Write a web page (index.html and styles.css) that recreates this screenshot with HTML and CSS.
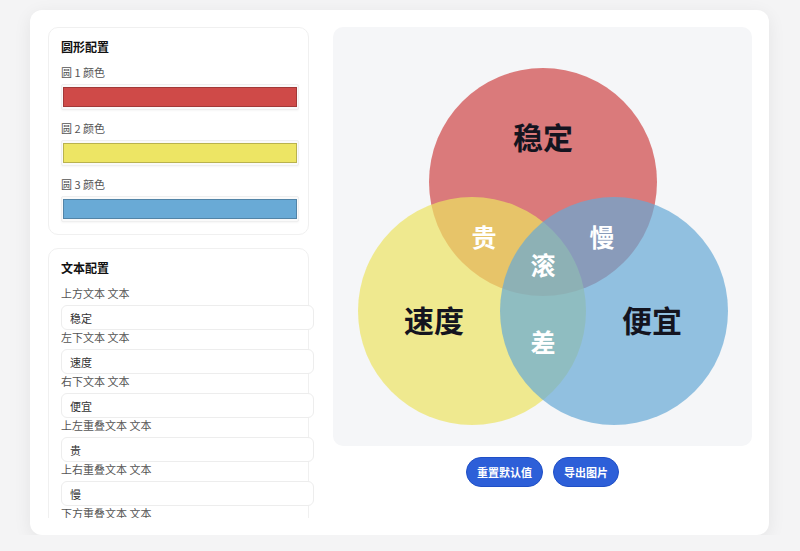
FILE: index.html
```html
<!DOCTYPE html>
<html lang="zh-CN">
<head>
<meta charset="utf-8">
<title>韦恩图</title>
<link rel="stylesheet" href="styles.css">
</head>
<body>
<div class="app">
  <aside class="sidebar">
    <section class="panel">
      <h3 class="panel-title">圆形配置</h3>
      <div class="field">
        <label class="label">圆 1 颜色</label>
        <div class="swatch-frame"><div class="swatch swatch-red"></div></div>
      </div>
      <div class="field">
        <label class="label">圆 2 颜色</label>
        <div class="swatch-frame"><div class="swatch swatch-yellow"></div></div>
      </div>
      <div class="field">
        <label class="label">圆 3 颜色</label>
        <div class="swatch-frame"><div class="swatch swatch-blue"></div></div>
      </div>
    </section>
    <section class="panel panel-text">
      <h3 class="panel-title">文本配置</h3>
      <label class="tlabel">上方文本 文本</label>
      <input class="tinput" type="text" value="稳定">
      <label class="tlabel">左下文本 文本</label>
      <input class="tinput" type="text" value="速度">
      <label class="tlabel">右下文本 文本</label>
      <input class="tinput" type="text" value="便宜">
      <label class="tlabel">上左重叠文本 文本</label>
      <input class="tinput" type="text" value="贵">
      <label class="tlabel">上右重叠文本 文本</label>
      <input class="tinput" type="text" value="慢">
      <label class="tlabel">下方重叠文本 文本</label>
    </section>
  </aside>
  <main class="stage">
    <div class="canvas">
      <svg class="venn" width="419" height="419" viewBox="0 0 419 419">
        <circle cx="210" cy="155" r="114" fill="#cf4646" fill-opacity="0.7"/>
        <circle cx="139" cy="284" r="114" fill="#ede462" fill-opacity="0.7"/>
        <circle cx="281" cy="284" r="114" fill="#67a9d6" fill-opacity="0.7"/>
        <g class="main-text">
          <text x="210" y="109">稳定</text>
          <text x="101" y="292">速度</text>
          <text x="319" y="292">便宜</text>
        </g>
        <g class="overlap-text">
          <text x="151" y="209">贵</text>
          <text x="269" y="209">慢</text>
          <text x="210" y="237">滚</text>
          <text x="210" y="314">差</text>
        </g>
      </svg>
    </div>
    <div class="actions">
      <button class="btn" type="button">重置默认值</button>
      <button class="btn" type="button">导出图片</button>
    </div>
  </main>
</div>
</body>
</html>
```
FILE: styles.css
```css
* { box-sizing: border-box; }

html, body {
  margin: 0;
  padding: 0;
}

body {
  background: #f4f4f5;
  font-family: "PingFang SC", "Noto Sans CJK SC", "Noto Sans", sans-serif;
  color: #222;
  padding-top: 10px;
}

.app {
  width: 739px;
  height: 525px;
  margin: 0 0 0 30px;
  background: #ffffff;
  border-radius: 12px;
  box-shadow: 0 4px 18px rgba(0, 0, 0, 0.07);
  padding: 17px 17px 17px 18px;
  display: flex;
  gap: 24px;
}

.sidebar {
  width: 261px;
  flex: none;
  height: 491px;
  overflow: visible;
  clip-path: inset(0 -20px 0 -20px);
  display: flex;
  flex-direction: column;
  gap: 13px;
}

.panel {
  border: 1px solid #f0f0f0;
  border-radius: 10px;
  padding: 11px 11px 12px 12px;
  background: #fff;
  flex: none;
}

.panel-title {
  margin: 0 0 10px 0;
  font-size: 12px;
  line-height: 16px;
  font-weight: 700;
  color: #111;
}

.field + .field { margin-top: 11px; }

.label {
  display: block;
  font-size: 11px;
  line-height: 14px;
  color: #555;
  margin-bottom: 5px;
}

.swatch-frame {
  height: 26px;
  border: 1px solid #efefef;
  border-radius: 2px;
  padding: 2px 1px;
  background: #fafafa;
  width: 238px;
  box-shadow: 0 1px 2px rgba(0, 0, 0, 0.04);
}

.swatch {
  height: 100%;
  border: 1px solid rgba(0, 0, 0, 0.22);
}

.swatch-red { background: #cf4a48; }
.swatch-yellow { background: #ede564; }
.swatch-blue { background: #69aad6; }

.tlabel {
  display: block;
  font-size: 11px;
  line-height: 14px;
  color: #555;
  margin-bottom: 5px;
}

.tinput {
  display: block;
  width: 253px;
  height: 25px;
  margin: 0;
  padding: 0 8px;
  border: 1px solid #ededed;
  border-radius: 6px;
  background: #fff;
  font-family: inherit;
  font-size: 11px;
  color: #333;
  outline: none;
}

.stage {
  width: 419px;
  flex: none;
  display: flex;
  flex-direction: column;
  align-items: center;
}

.canvas {
  width: 419px;
  height: 419px;
  background: #f5f6f8;
  border-radius: 10px;
  overflow: hidden;
}

.venn { display: block; }

.venn text {
  font-family: "PingFang SC", "Noto Sans CJK SC", sans-serif;
  font-weight: 700;
  text-anchor: middle;
  dominant-baseline: central;
}

.main-text text {
  font-size: 30px;
  fill: #14141f;
}

.overlap-text text {
  font-size: 25px;
  fill: #ffffff;
}

.actions {
  display: flex;
  gap: 10px;
  margin-top: 11px;
  justify-content: center;
}

.btn {
  height: 30px;
  padding: 0 10px;
  border: 1px solid #1f4fc6;
  border-radius: 15px;
  background: #2d5fd8;
  color: #fff;
  font-family: inherit;
  font-size: 11px;
  font-weight: 700;
  cursor: pointer;
}
```
